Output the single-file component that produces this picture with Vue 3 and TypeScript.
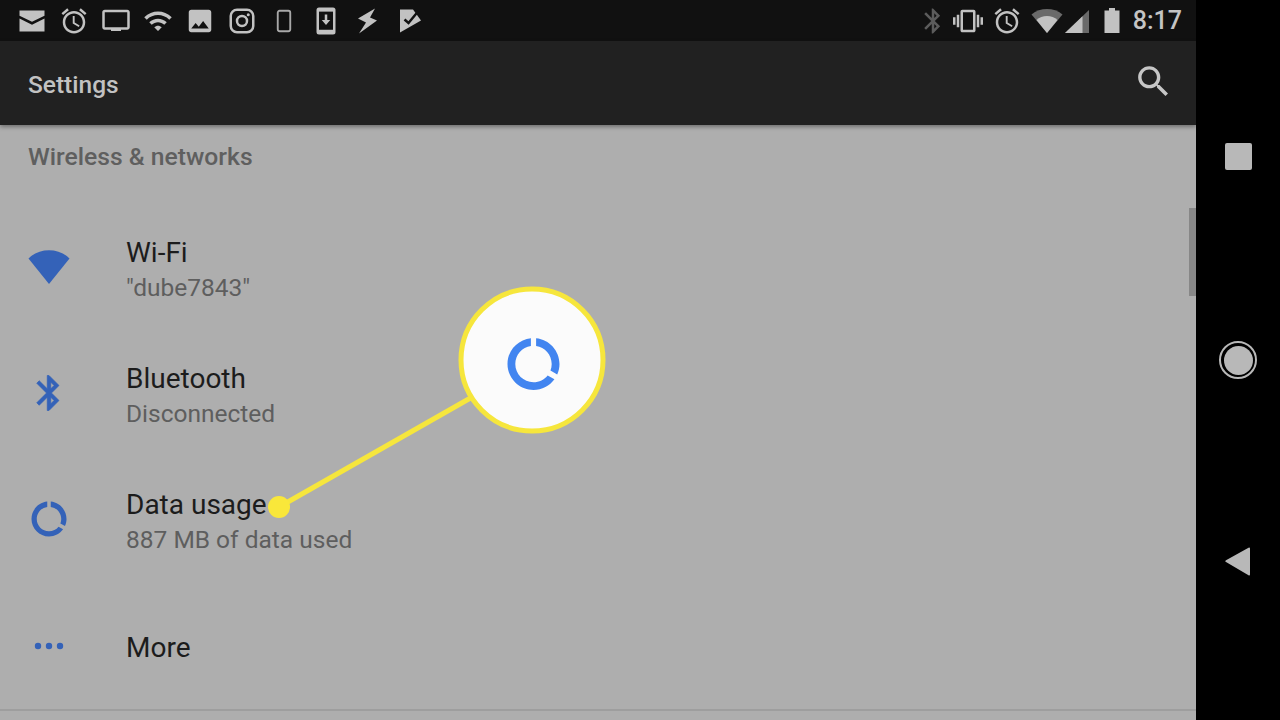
<script setup lang="ts">
const DATA_USAGE =
  'M13 2.05v3.03c3.39.49 6 3.39 6 6.92 0 .9-.18 1.75-.48 2.54l2.6 1.53c.56-1.24.88-2.62.88-4.07 0-5.18-3.95-9.45-9-9.95zM12 19c-3.87 0-7-3.13-7-7 0-3.53 2.61-6.43 6-6.92V2.05c-5.06.5-9 4.76-9 9.95 0 5.52 4.47 10 9.99 10 3.31 0 6.24-1.61 8.06-4.09l-2.6-1.53C16.17 17.98 14.21 19 12 19z'
const BLUETOOTH =
  'M17.71 7.71L12 2h-1v7.59L6.41 5 5 6.41 10.59 12 5 17.59 6.41 19 11 14.41V22h1l5.71-5.71-4.3-4.29 4.3-4.29zM13 5.83l1.88 1.88L13 9.59V5.83zm1.88 10.46L13 18.17v-3.76l1.88 1.88z'
const ALARM =
  'M22 5.72l-4.6-3.86-1.29 1.53 4.6 3.86L22 5.72zM7.88 3.39L6.6 1.86 2 5.71l1.29 1.53 4.59-3.85zM12.5 8H11v6l4.75 2.85.75-1.23-4-2.37V8zM12 4c-4.97 0-9 4.03-9 9s4.03 9 9 9 9-4.03 9-9-4.03-9-9-9zm0 16c-3.87 0-7-3.13-7-7s3.13-7 7-7 7 3.13 7 7-3.13 7-7 7z'
</script>

<template>
  <div class="screen">
    <div class="main">
      <div class="status">
        <div class="status-left">
          <svg class="si" viewBox="0 0 24 24"><path d="M2 3.6h20v4.2L12 12.6 2 7.8zM2 10l10 5 10-5v10.4H2z" /></svg>
          <svg class="si" viewBox="0 0 24 24"><path :d="ALARM" /></svg>
          <svg class="si" viewBox="0 0 24 24"><path d="M21 3H3c-1.1 0-2 .9-2 2v12c0 1.1.9 2 2 2h5v1h8v-1h5c1.1 0 1.99-.9 1.99-2L23 5c0-1.1-.9-2-2-2zm0 14H3V5h18v12z" /></svg>
          <svg class="si" viewBox="0 0 24 24"><path d="M1 9l2 2c4.97-4.97 13.03-4.97 18 0l2-2C16.93 2.93 7.08 2.93 1 9zm8 8l3 3 3-3c-1.65-1.66-4.34-1.66-6 0zm-4-4l2 2c2.76-2.76 7.24-2.76 10 0l2-2C15.14 9.14 8.87 9.14 5 13z" /></svg>
          <svg class="si" viewBox="0 0 24 24"><path d="M21 19V5c0-1.1-.9-2-2-2H5c-1.1 0-2 .9-2 2v14c0 1.1.9 2 2 2h14c1.1 0 2-.9 2-2zM8.5 13.5l2.5 3.01L14.5 12l4.5 6H5l3.5-4.5z" /></svg>
          <svg class="si" viewBox="0 0 24 24">
            <rect x="3" y="3" width="18" height="18" rx="5" fill="none" stroke="#c2c2c2" stroke-width="2" />
            <circle cx="12" cy="12" r="4" fill="none" stroke="#c2c2c2" stroke-width="2" />
            <circle cx="17" cy="7" r="1.2" />
          </svg>
          <svg class="si" viewBox="0 0 24 24"><rect x="7" y="3.8" width="10" height="16.4" rx="1.5" fill="none" stroke="#a8a8a8" stroke-width="1.5" /></svg>
          <svg class="si" viewBox="0 0 24 24">
            <rect x="4.4" y="1.2" width="15.2" height="21.6" rx="2" />
            <rect x="6.4" y="4.5" width="11.2" height="14.5" fill="#111" />
            <path d="M11 6.8h2v4.4h2.4L12 15.2l-3.4-4H11z" />
          </svg>
          <svg class="si" viewBox="0 0 24 24"><path d="M17.600 2L4 10l6.400 3.200L4.800 22l14.400-10.400-5.600-2.400z" /></svg>
          <svg class="si" viewBox="0 0 24 24">
            <path d="M4 2.800h10.400l6.400 8.800L4 21.200z" />
            <path d="M7.600 10.800l3.200 2.800 7.600-9.200" fill="none" stroke="#111" stroke-width="2" />
          </svg>
        </div>
        <div class="status-right">
          <svg class="si bt" viewBox="0 0 24 24"><path :d="BLUETOOTH" /></svg>
          <svg class="si vib" viewBox="0 0 24 24"><path d="M0 15h2V9H0v6zm3 2h2V7H3v10zm19-8v6h2V9h-2zm-3 8h2V7h-2v10zM16.5 3h-9C6.67 3 6 3.67 6 4.5v15c0 .83.67 1.5 1.5 1.5h9c.83 0 1.5-.67 1.5-1.5v-15c0-.83-.67-1.5-1.5-1.5zM16 19H8V5h8v14z" /></svg>
          <svg class="si alarm2" viewBox="0 0 24 24"><path :d="ALARM" /></svg>
          <svg class="fan" viewBox="0 0 32 24" width="32" height="24">
            <path d="M0.500 5.500C9-1.800 23-1.800 31.500 5.500L16 24z" fill="#6a6a6a" />
            <path d="M5.500 11C11 5.500 21 5.500 26.500 11L16 24z" fill="#c2c2c2" />
          </svg>
          <svg class="sig" viewBox="0 0 24 23" width="24" height="23">
            <path d="M24 0v23H0z" fill="#6a6a6a" />
            <path d="M17.500 6.200V23H0z" fill="#c2c2c2" />
          </svg>
          <svg class="bat" viewBox="0 0 16 25" width="16" height="25"><path d="M5 0h6v2.500h4.500V25H.5V2.500H5z" /></svg>
          <span class="time">8:17</span>
        </div>
      </div>

      <div class="toolbar">
        <span class="toolbar-title">Settings</span>
        <svg class="search" viewBox="0 0 24 24"><path d="M15.5 14h-.79l-.28-.27C15.41 12.59 16 11.11 16 9.5 16 5.910 13.09 3 9.500 3S3 5.910 3 9.500 5.910 16 9.500 16c1.610 0 3.090-.59 4.230-1.570l.27.28v.79l5 4.990L20.490 19l-4.990-5zm-6 0C7.010 14 5 11.990 5 9.500S7.010 5 9.500 5 14 7.010 14 9.500 11.990 14 9.500 14z" /></svg>
      </div>

      <div class="content">
        <div class="section">Wireless &amp; networks</div>

        <div class="row">
          <div class="icon">
            <svg width="42" height="34" viewBox="0 0 42 34"><path d="M0.500 8.500C11-2.500 31-2.500 41.500 8.500L21 34z" fill="#3462b8" /></svg>
          </div>
          <div class="text">
            <div class="title">Wi-Fi</div>
            <div class="sub">"dube7843"</div>
          </div>
        </div>

        <div class="row">
          <div class="icon">
            <svg class="row-bt" viewBox="0 0 24 24"><path :d="BLUETOOTH" fill="#3462b8" stroke="#3462b8" stroke-width="0.4" /></svg>
          </div>
          <div class="text">
            <div class="title">Bluetooth</div>
            <div class="sub">Disconnected</div>
          </div>
        </div>

        <div class="row">
          <div class="icon">
            <svg class="row-data" viewBox="0 0 24 24"><path :d="DATA_USAGE" fill="#3462b8" /></svg>
          </div>
          <div class="text">
            <div class="title">Data usage</div>
            <div class="sub">887 MB of data used</div>
          </div>
        </div>

        <div class="row row-more">
          <div class="icon">
            <svg width="30" height="10" viewBox="0 0 30 10">
              <circle cx="4" cy="5" r="3.200" fill="#3462b8" />
              <circle cx="15" cy="5" r="3.200" fill="#3462b8" />
              <circle cx="26" cy="5" r="3.200" fill="#3462b8" />
            </svg>
          </div>
          <div class="text">
            <div class="title">More</div>
          </div>
        </div>

        <div class="divider"></div>
      </div>
    </div>

    <div class="nav">
      <div class="nav-square"></div>
      <div class="nav-circle"><div class="nav-dot"></div></div>
      <svg class="nav-back" viewBox="0 0 26 29" width="26" height="29"><path d="M25 1.500V27.500a1 1 0 0 1-1.500.8L1 15a1 1 0 0 1 0-1.700L23.500.7a1 1 0 0 1 1.500.8z" /></svg>
    </div>

    <div class="scrollbar"></div>

    <svg class="callout" viewBox="0 0 1280 720" width="1280" height="720">
      <line x1="279" y1="507" x2="474" y2="396" stroke="#f6e63c" stroke-width="5" />
      <circle cx="279" cy="507" r="11" fill="#f9e73a" />
      <circle cx="532" cy="360" r="71" fill="#fbfbfb" stroke="#f6e63c" stroke-width="5" />
      <g transform="translate(502.300 332.800) scale(2.600)"><path :d="DATA_USAGE" fill="#4285f0" /></g>
    </svg>
  </div>
</template>

<style>
html,
body {
  margin: 0;
  background: #000;
  overflow: hidden;
}
</style>

<style scoped>
.screen {
  position: relative;
  display: flex;
  width: 1280px;
  height: 720px;
  background: #000;
  font-family: Roboto, "Liberation Sans", sans-serif;
  overflow: hidden;
}
.main {
  width: 1196px;
  display: flex;
  flex-direction: column;
}
.status {
  height: 41px;
  background: #111;
  display: flex;
  align-items: center;
  padding-left: 11px;
  flex: none;
}
.status-left {
  display: flex;
  align-items: center;
}
.si {
  width: 30px;
  height: 30px;
  margin: 0 6px;
  fill: #c2c2c2;
  flex: none;
}
.status-right {
  margin-left: auto;
  display: flex;
  align-items: center;
  padding-right: 14px;
}
.bt {
  margin: 0;
  fill: #5c5c5c;
}
.vib {
  margin: 0 0 0 5px;
}
.alarm2 {
  margin: 0 0 0 9px;
}
.fan {
  margin-left: 9px;
}
.sig {
  margin: 1px 0 0 2px;
}
.bat {
  margin-left: 15px;
  fill: #c2c2c2;
}
.time {
  margin-left: 13px;
  font-size: 25px;
  font-weight: 500;
  color: #c4c4c4;
  line-height: 43px;
}
.toolbar {
  height: 84px;
  background: #212121;
  display: flex;
  align-items: center;
  justify-content: space-between;
  padding: 0 22px 0 28px;
  flex: none;
  position: relative;
  box-shadow: 0 2px 4px rgba(0, 0, 0, 0.35);
}
.toolbar-title {
  font-size: 24.500px;
  font-weight: 500;
  color: #c2c2c2;
  padding-top: 2px;
}
.search {
  width: 41px;
  height: 41px;
  fill: #c6c6c6;
  margin-top: -3px;
}
.content {
  flex: 1;
  background: #aeaeae;
}
.section {
  height: 82px;
  box-sizing: border-box;
  padding: 16px 0 0 28px;
  font-size: 24.700px;
  font-weight: 500;
  line-height: 32px;
  color: #5f5f5f;
}
.row {
  height: 126px;
  display: flex;
  align-items: center;
}
.row-more {
  height: 124px;
}
.icon {
  width: 42px;
  margin-left: 28px;
  margin-right: 56px;
  display: flex;
  justify-content: center;
  margin-top: -6px;
}
.row-more .icon {
  margin-top: -2px;
}
.row-bt {
  width: 42px;
  height: 42px;
}
.row-data {
  width: 42px;
  height: 42px;
}
.title {
  font-size: 28px;
  line-height: 36px;
  color: #1c1c1c;
  padding-top: 1px;
  margin-bottom: -1px;
}
.sub {
  font-size: 24.500px;
  line-height: 36px;
  color: #5e5e5e;
}
.divider {
  height: 2px;
  background: #9e9e9e;
}
.nav {
  width: 84px;
  display: flex;
  flex-direction: column;
  align-items: center;
  padding-top: 143px;
  box-sizing: border-box;
}
.nav-square {
  width: 27px;
  height: 27px;
  background: #b8b8b8;
  border-radius: 2px;
}
.nav-circle {
  width: 38px;
  height: 38px;
  margin-top: 171px;
  box-sizing: border-box;
  border: 2px solid #b8b8b8;
  border-radius: 50%;
  display: flex;
  align-items: center;
  justify-content: center;
}
.nav-dot {
  width: 29px;
  height: 29px;
  border-radius: 50%;
  background: #b8b8b8;
}
.nav-back {
  margin-top: 168px;
  fill: #b8b8b8;
}
.scrollbar {
  position: absolute;
  left: 1189px;
  top: 208px;
  width: 7px;
  height: 88px;
  background: #878787;
}
.callout {
  position: absolute;
  left: 0;
  top: 0;
  pointer-events: none;
}
</style>
